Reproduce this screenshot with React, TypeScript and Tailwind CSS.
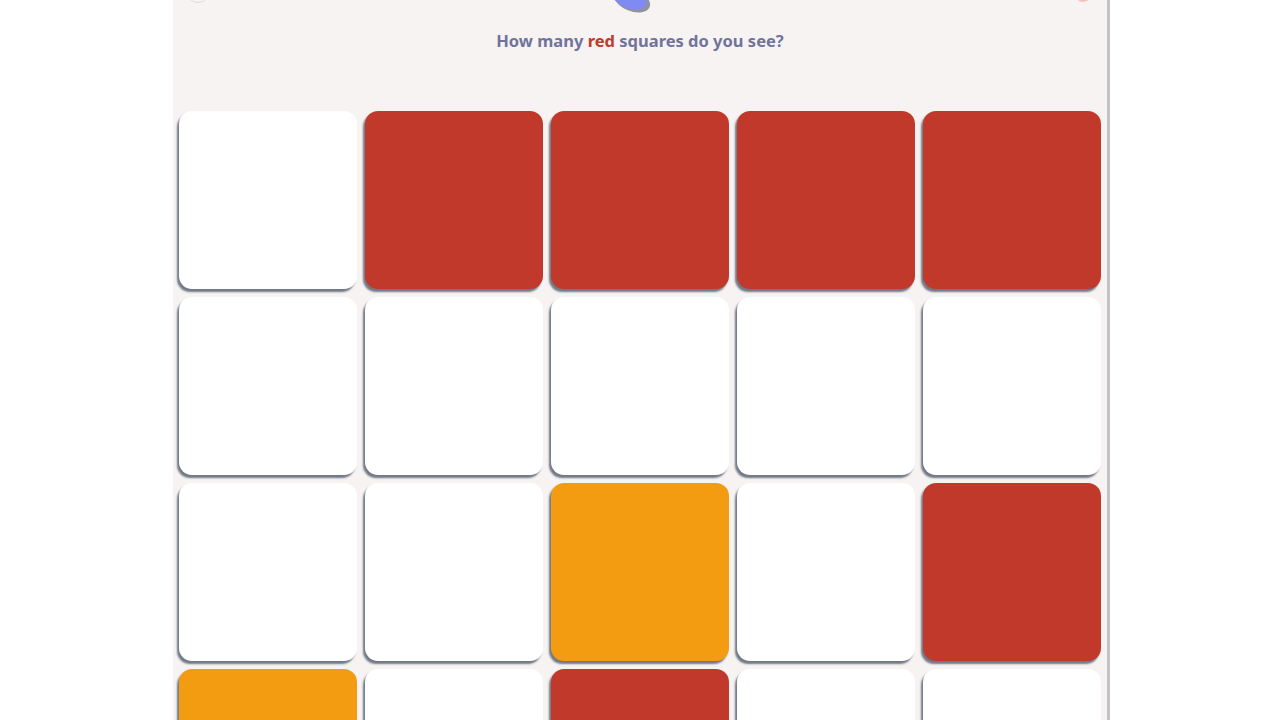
import React from "react";

const W = "bg-white";
const R = "bg-[#c0392b]";
const O = "bg-[#f39c12]";

const rows = [
  [W, R, R, R, R],
  [W, W, W, W, W],
  [W, W, O, W, R],
  [O, W, R, W, W],
];

export default function App() {
  return (
    <div className="w-[1280px] h-[720px] overflow-hidden bg-white" style={{ fontFamily: '"Noto Sans", "Liberation Sans", sans-serif' }}>
      <div className="relative ml-[173px] w-[937px] h-[760px] bg-[#f7f3f2] border-r-[3px] border-[#c4c4c8]">
        <div className="absolute left-[14px] top-[-8px] w-[22px] h-[11px] rounded-b-full border-b border-[#dcd8d8]" />
        <div className="absolute right-[16px] top-[-8px] w-[16px] h-[10px] rounded-b-full border-b-2 border-[#f0c4bd]" />
        <svg className="absolute left-[430px] top-0" width="60" height="20" viewBox="0 0 60 20">
          <ellipse cx="29" cy="0" rx="19" ry="11" transform="rotate(22 29 0)" fill="#3d3f63" opacity="0.55" />
          <ellipse cx="26" cy="-2" rx="18" ry="10" transform="rotate(22 26 -2)" fill="#7f8bf2" />
        </svg>
        <div className="pt-[29px] h-[111px] text-center text-[16.5px] font-bold text-[#70739a]">
          How many <span className="text-[#c0392b]">red</span> squares do you see?
        </div>
        <div className="px-[6px] grid grid-cols-5 gap-[8px] w-[934px]">
          {rows.flat().map((c, i) => (
            <div key={i} className={`${c} h-[178px] rounded-[13px] shadow-[-2px_3px_2px_#707986]`} />
          ))}
        </div>
      </div>
    </div>
  );
}
